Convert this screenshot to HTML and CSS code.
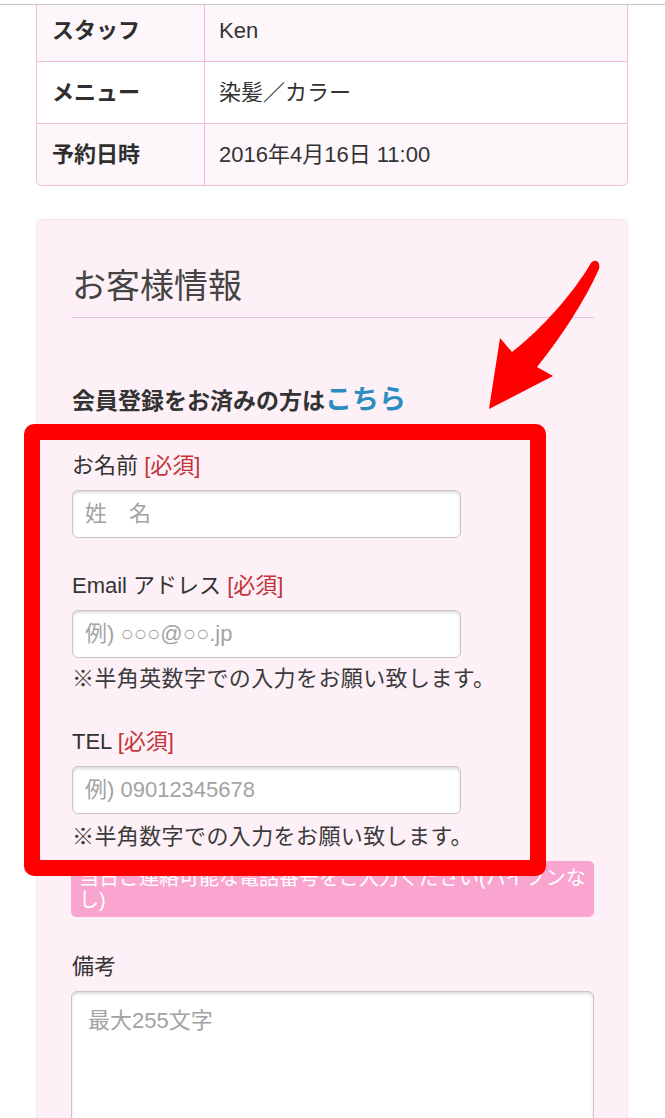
FILE: index.html
```html
<!DOCTYPE html>
<html lang="ja">
<head>
<meta charset="utf-8">
<title>予約確認</title>
<link rel="stylesheet" href="styles.css">
</head>
<body>
<div class="topbar"></div>
<main class="page">
  <div class="summary">
    <div class="row odd"><div class="cell key">スタッフ</div><div class="cell val">Ken</div></div>
    <div class="row"><div class="cell key">メニュー</div><div class="cell val">染髪／カラー</div></div>
    <div class="row odd last"><div class="cell key">予約日時</div><div class="cell val">2016年4月16日 11:00</div></div>
  </div>

  <section class="card">
    <h2 class="card-title">お客様情報</h2>
    <p class="member">会員登録をお済みの方は<a class="member-link" href="#">こちら</a></p>

    <div class="field">
      <label class="label">お名前 <span class="req">[必須]</span></label>
      <input class="input" type="text" placeholder="姓　名">
    </div>

    <div class="field">
      <label class="label">Email アドレス <span class="req">[必須]</span></label>
      <input class="input" type="text" placeholder="例) ○○○@○○.jp">
      <p class="note">※半角英数字での入力をお願い致します。</p>
    </div>

    <div class="field field-tel">
      <label class="label">TEL <span class="req">[必須]</span></label>
      <input class="input" type="text" placeholder="例) 09012345678">
      <p class="note">※半角数字での入力をお願い致します。</p>
    </div>

    <div class="hint">当日ご連絡可能な電話番号をご入力ください(ハイフンなし)</div>

    <div class="field field-memo">
      <label class="label">備考</label>
      <textarea class="textarea" placeholder="最大255文字"></textarea>
    </div>
  </section>

  <div class="annot-box"></div>
  <svg class="annot-arrow" width="130" height="170" viewBox="0 0 130 170" aria-hidden="true">
    <path d="M111 13 C94 42 64 77 32 102 L20 88 L9 159 L73 126 L57 117 C82 86 104 52 119 19 C121 12 115 8 111 13 Z" fill="#ff0000"/>
  </svg>
</main>
</body>
</html>
```

FILE: styles.css
```css
* { box-sizing: border-box; }

html, body {
  margin: 0;
  padding: 0;
  background: #ffffff;
}

body {
  font-family: "Liberation Sans", "Noto Sans CJK JP", sans-serif;
  color: #333333;
  font-size: 22px;
}

.topbar {
  position: fixed;
  top: 0;
  left: 0;
  right: 0;
  height: 5px;
  background: #ffffff;
  border-bottom: 1px solid #c4c4c4;
  z-index: 5;
}

.page {
  position: relative;
  width: 665px;
  padding: 0 37px 0 36px;
  overflow: hidden;
  height: 1118px;
}

/* summary table */
.summary {
  border: 1px solid #f0bcd8;
  border-top: none;
  border-radius: 0 0 6px 6px;
  overflow: hidden;
}

.row {
  display: grid;
  grid-template-columns: 168px 1fr;
  height: 62px;
  border-bottom: 1px solid #f0bcd8;
  background: #ffffff;
}

.row.odd { background: #fdf6fa; }
.row.last { border-bottom: none; height: 61px; }

.cell {
  display: flex;
  align-items: center;
  line-height: 1;
}

.key {
  padding-left: 15px;
  font-weight: bold;
  color: #2e2e2e;
  border-right: 1px solid #f0bcd8;
}

.val {
  padding-left: 14px;
  color: #333333;
}

/* card */
.card {
  margin-top: 33px;
  background: #fdf1f7;
  border: 1px solid #f6e4ee;
  border-radius: 6px;
  padding: 46px 33px 0 35px;
  height: 920px;
}

.card-title {
  margin: 0;
  font-size: 34px;
  line-height: 40px;
  font-weight: normal;
  color: #444444;
  padding-bottom: 11px;
  border-bottom: 1px solid #e9c3da;
}

.member {
  margin: 65px 0 0;
  font-size: 23px;
  line-height: 34px;
  font-weight: bold;
  color: #333333;
  display: flex;
  align-items: baseline;
}

.member-link {
  font-size: 27px;
  color: #2b8cc0;
  text-decoration: none;
}

.field {
  margin-top: 33px;
}

.label {
  display: block;
  line-height: 30px;
  margin-bottom: 9px;
  color: #333333;
}

.req { color: #c4343a; }

.input {
  display: block;
  width: 389px;
  height: 48px;
  border: 1px solid #c6c6c6;
  border-radius: 6px;
  background: #ffffff;
  box-shadow: inset 0 2px 3px rgba(0, 0, 0, 0.14);
  padding: 0 12px;
  font-family: inherit;
  font-size: 22px;
  color: #333333;
}

.input::placeholder,
.textarea::placeholder {
  color: #a3a3a3;
}

.note {
  margin: 6px 0 0;
  line-height: 30px;
  color: #3a3a3a;
  letter-spacing: 0.4px;
}

.field-tel .note { margin-top: 8px; }

.hint {
  margin-top: 9px;
  background: #f9a5d0;
  color: #ffffff;
  border-radius: 5px;
  font-size: 20px;
  line-height: 22px;
  padding: 6px 8px 6px 8px;
  margin-left: -1px;
}

.field-memo { margin-top: 35px; }

.textarea {
  display: block;
  width: 523px;
  height: 170px;
  margin-left: -1px;
  border: 1px solid #c6c6c6;
  border-radius: 6px;
  background: #ffffff;
  box-shadow: inset 0 2px 3px rgba(0, 0, 0, 0.14);
  padding: 10px 16px;
  font-family: inherit;
  font-size: 22px;
  resize: none;
}

/* annotation overlays */
.annot-box {
  position: absolute;
  left: 24px;
  top: 424px;
  width: 522px;
  height: 452px;
  border: 16px solid #ff0000;
  border-radius: 10px;
  pointer-events: none;
}

.annot-arrow {
  position: absolute;
  left: 480px;
  top: 250px;
}
```
